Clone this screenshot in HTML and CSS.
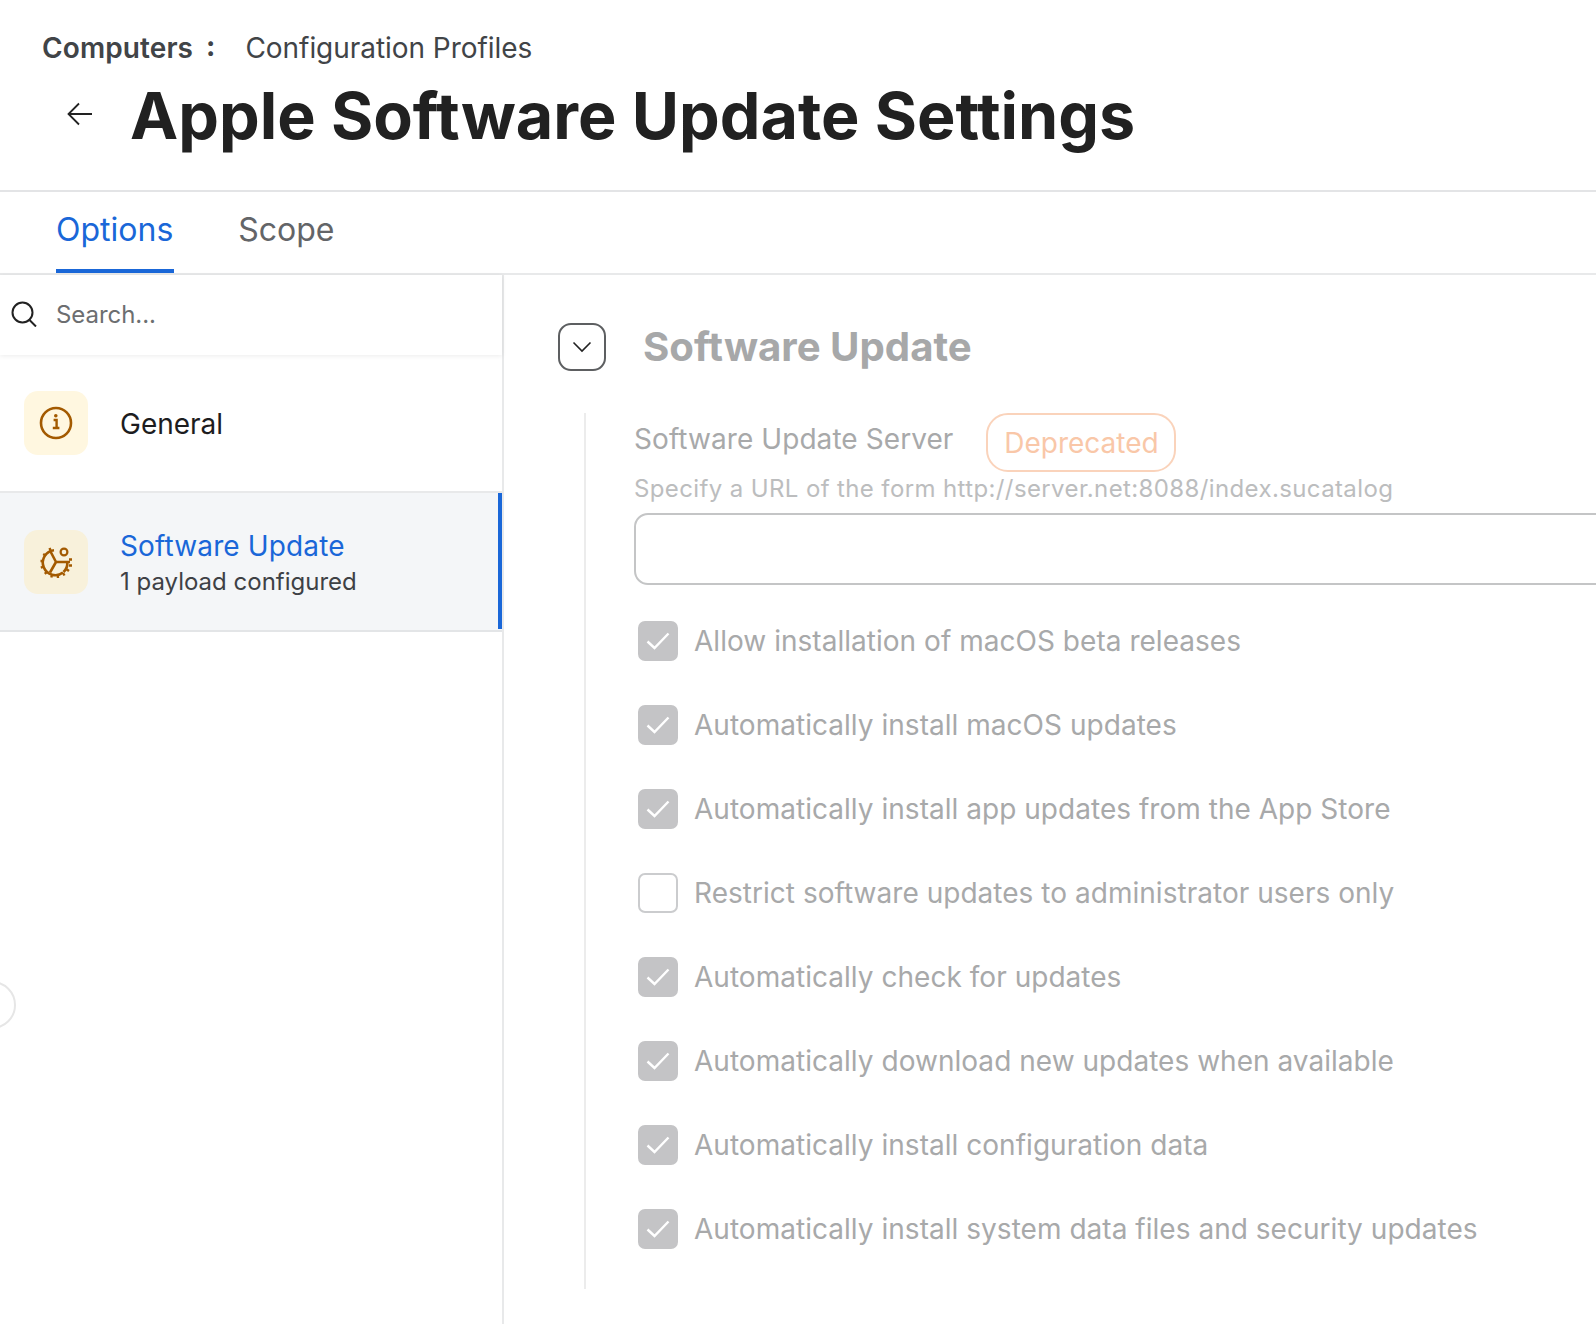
FILE: index.html
```html
<!DOCTYPE html>
<html lang="en">
<head>
<meta charset="utf-8">
<title>Apple Software Update Settings</title>
<link rel="stylesheet" href="styles.css">
</head>
<body>
<div class="page">
  <header class="header">
    <div class="crumbs"><span class="crumb-root">Computers</span><span class="crumb-sep">:</span><span class="crumb-leaf">Configuration Profiles</span></div>
    <div class="title-row">
      <svg class="back" viewBox="0 0 26 24" width="26" height="24" fill="none" stroke="#222" stroke-width="1.8"><path d="M25 12H2M12 1.5 1.5 12 12 22.5"/></svg>
      <h1 class="title">Apple Software Update Settings</h1>
    </div>
  </header>
  <nav class="tabs">
    <a class="tab tab-active">Options</a>
    <a class="tab">Scope</a>
  </nav>
  <div class="main">
    <aside class="sidebar">
      <div class="search">
        <svg class="search-icon" viewBox="0 0 26 26" width="26" height="26" fill="none" stroke="#222" stroke-width="2"><circle cx="11.5" cy="11.5" r="10"/><path d="M18.5 19 25 25.5"/></svg>
        <span class="search-text">Search...</span>
      </div>
      <div class="item">
        <div class="item-icon">
          <svg viewBox="0 0 34 34" width="34" height="34" fill="none" stroke="#a35a00" stroke-width="2.6"><circle cx="17" cy="17" r="15"/><path d="M14.6 14h3v7.4M13.8 22h6.6" stroke-width="2.4"/><circle cx="16.8" cy="9.8" r="1.8" fill="#a35a00" stroke="none"/></svg>
        </div>
        <div class="item-name">General</div>
      </div>
      <div class="item item-active">
        <div class="item-icon item-icon-active">
          <svg viewBox="0 0 34 34" width="34" height="34" fill="none" stroke="#a35a00" stroke-width="2.6"><path d="M24 27.500A12.500 12.500 0 1 1 15 5.200"/><path d="M28.300 17.500A12 12 0 0 1 24.500 27"/><path d="M17 17 11.500 6.500M17 17H31M17 17 11 27.500"/><circle cx="25" cy="7" r="3.400" stroke-width="2.200"/><path d="M10.500 3 12 6.500M4.200 9l2.800 1.700M1.500 16h3M1.800 22.700l3-1M5.800 28.800l2.500-2.300M12.300 32.500l.8-3M19 33l-.3-3.200M25.500 30.500 24 28M30 26l-2.400-1.800M33 20.500h-3M33 14.500h-3" stroke-width="2.400"/></svg>
        </div>
        <div class="item-body">
          <div class="item-name item-name-active">Software Update</div>
          <div class="item-sub">1 payload configured</div>
        </div>
      </div>
      <div class="collapse-handle"></div>
    </aside>
    <section class="content">
      <div class="section-head">
        <div class="chevron-box">
          <svg viewBox="0 0 20 12" width="20" height="12" fill="none" stroke="#222" stroke-width="1.6"><path d="M1.500 1.500 10 10l8.500-8.500"/></svg>
        </div>
        <h2 class="section-title">Software Update</h2>
      </div>
      <div class="section-body">
        <div class="field-label-row">
          <span class="field-label">Software Update Server</span>
          <span class="badge">Deprecated</span>
        </div>
        <div class="hint">Specify a URL of the form http://server.net:8088/index.sucatalog</div>
        <div class="input"></div>
        <ul class="checks">
          <li class="check"><span class="box box-on"><svg viewBox="0 0 24 18" width="24" height="18" fill="none" stroke="#fff" stroke-width="2.400"><path d="M1.500 9.500 8.500 16 22.500 1.500"/></svg></span><span class="check-label">Allow installation of macOS beta releases</span></li>
          <li class="check"><span class="box box-on"><svg viewBox="0 0 24 18" width="24" height="18" fill="none" stroke="#fff" stroke-width="2.400"><path d="M1.500 9.500 8.500 16 22.500 1.500"/></svg></span><span class="check-label">Automatically install macOS updates</span></li>
          <li class="check"><span class="box box-on"><svg viewBox="0 0 24 18" width="24" height="18" fill="none" stroke="#fff" stroke-width="2.400"><path d="M1.500 9.500 8.500 16 22.500 1.500"/></svg></span><span class="check-label">Automatically install app updates from the App Store</span></li>
          <li class="check"><span class="box"></span><span class="check-label">Restrict software updates to administrator users only</span></li>
          <li class="check"><span class="box box-on"><svg viewBox="0 0 24 18" width="24" height="18" fill="none" stroke="#fff" stroke-width="2.400"><path d="M1.500 9.500 8.500 16 22.500 1.500"/></svg></span><span class="check-label">Automatically check for updates</span></li>
          <li class="check"><span class="box box-on"><svg viewBox="0 0 24 18" width="24" height="18" fill="none" stroke="#fff" stroke-width="2.400"><path d="M1.500 9.500 8.500 16 22.500 1.500"/></svg></span><span class="check-label">Automatically download new updates when available</span></li>
          <li class="check"><span class="box box-on"><svg viewBox="0 0 24 18" width="24" height="18" fill="none" stroke="#fff" stroke-width="2.400"><path d="M1.500 9.500 8.500 16 22.500 1.500"/></svg></span><span class="check-label">Automatically install configuration data</span></li>
          <li class="check"><span class="box box-on"><svg viewBox="0 0 24 18" width="24" height="18" fill="none" stroke="#fff" stroke-width="2.400"><path d="M1.500 9.500 8.500 16 22.500 1.500"/></svg></span><span class="check-label">Automatically install system data files and security updates</span></li>
        </ul>
      </div>
    </section>
  </div>
</div>
</body>
</html>
```
FILE: styles.css
```css
* { box-sizing: border-box; }
html, body { margin: 0; padding: 0; background: #fff; }
body { font-family: Inter, "Liberation Sans", sans-serif; overflow: hidden; width: 1596px; height: 1324px; }
.page { width: 1596px; height: 1324px; display: flex; flex-direction: column; overflow: hidden; }

.header { height: 192px; border-bottom: 2px solid #e3e4e6; padding: 30px 0 0 42px; flex: none; }
.crumbs { display: flex; align-items: center; height: 36px; font-size: 28px; color: #414447; }
.crumb-root { font-weight: 600; letter-spacing: .1px; }
.crumb-sep { font-weight: 700; margin-left: 13px; margin-right: 30px; position: relative; top: -2px; }
.crumb-leaf { letter-spacing: -.05px; }
.title-row { display: flex; align-items: center; margin-top: 15px; height: 70px; }
.back { margin-left: 25px; margin-right: 37px; flex: none; position: relative; top: -2px; }
.title { margin: 0; font-size: 64.6px; font-weight: 700; color: #212121; line-height: 70px; white-space: nowrap; }

.tabs { height: 83px; display: flex; padding-left: 56px; gap: 64px; border-bottom: 2px solid #e8e9ea; flex: none; }
.tab { font-size: 32px; color: #636568; height: 81px; line-height: 76px; }
.tab-active { color: #1a67d8; border-bottom: 4px solid #1a67d8; padding-right: 1px; }

.main { display: flex; flex: 1; min-height: 0; }
.sidebar { width: 504px; flex: none; border-right: 2px solid #e8e9ea; position: relative; }
.search { height: 80px; display: flex; align-items: center; padding: 0 0 2px 11px; box-shadow: 0 1px 5px rgba(0,0,0,.08); }
.search-icon { flex: none; margin-right: 19px; }
.search-text { font-size: 24px; color: #6c6e70; letter-spacing: -.05px; }
.item { height: 138px; display: flex; align-items: center; padding-left: 24px; border-bottom: 2px solid #e8e9ea; }
.item-active { height: 139px; background: #f4f6f8; border-bottom: 2px solid #e3e5e7; position: relative; }
.item-active::after { content: ""; position: absolute; right: 0; top: 0; bottom: 1px; width: 4px; background: #1a67d8; }
.item-icon { width: 64px; height: 64px; border-radius: 14px; background: #fff7e0; display: flex; align-items: center; justify-content: center; flex: none; margin-right: 32px; }
.item-icon-active { background: #f8f1db; }
.item-name { font-size: 28px; color: #1d1d1f; padding-top: 2px; }
.item-body { padding-top: 3px; }
.item-name-active { color: #1a67d8; line-height: 36px; padding-top: 0; letter-spacing: .13px; }
.item-sub { font-size: 24px; color: #3e4145; line-height: 34px; margin-top: 1px; }
.collapse-handle { position: absolute; left: -32px; top: 706px; width: 48px; height: 48px; border-radius: 50%; border: 2px solid #e6e6e6; background: #fff; }

.content { flex: 1; min-width: 0; padding: 48px 0 0 54px; }
.section-head { display: flex; align-items: center; height: 48px; }
.chevron-box { width: 48px; height: 48px; border: 2px solid #5d5f61; border-radius: 13px; display: flex; align-items: center; justify-content: center; flex: none; margin-right: 37px; }
.section-title { margin: 0; font-size: 40.2px; font-weight: 700; color: #a7a8a9; white-space: nowrap; position: relative; top: -1px; }
.section-body { margin-left: 26px; margin-top: 42px; border-left: 2px solid #ececec; padding-left: 48px; height: 876px; }
.field-label-row { display: flex; align-items: flex-start; height: 59px; }
.field-label { font-size: 28px; color: #a8a9aa; line-height: 36px; margin-top: 8px; letter-spacing: .07px; }
.badge { margin-left: 33px; height: 59px; width: 190px; border: 2px solid #fad3bb; border-radius: 22px; color: #f9c7a8; font-size: 28px; display: flex; align-items: center; justify-content: center; }
.hint { font-size: 24px; color: #bcbdbe; line-height: 34px; letter-spacing: .38px; }
.input { width: 1100px; height: 72px; margin-top: 7px; border: 2px solid #c4c5c6; border-radius: 14px; }
.checks { list-style: none; margin: 36px 0 0; padding: 0; display: flex; flex-direction: column; gap: 44px; }
.check { display: flex; align-items: center; height: 40px; padding-left: 4px; }
.box { width: 40px; height: 40px; border-radius: 7px; border: 2px solid #cbccce; background: #fff; display: flex; align-items: center; justify-content: center; flex: none; margin-right: 16px; }
.box-on { background: #c4c4c6; border-color: #c4c4c6; }
.check-label { font-size: 28px; color: #a8a9aa; letter-spacing: .03px; white-space: nowrap; }
```
